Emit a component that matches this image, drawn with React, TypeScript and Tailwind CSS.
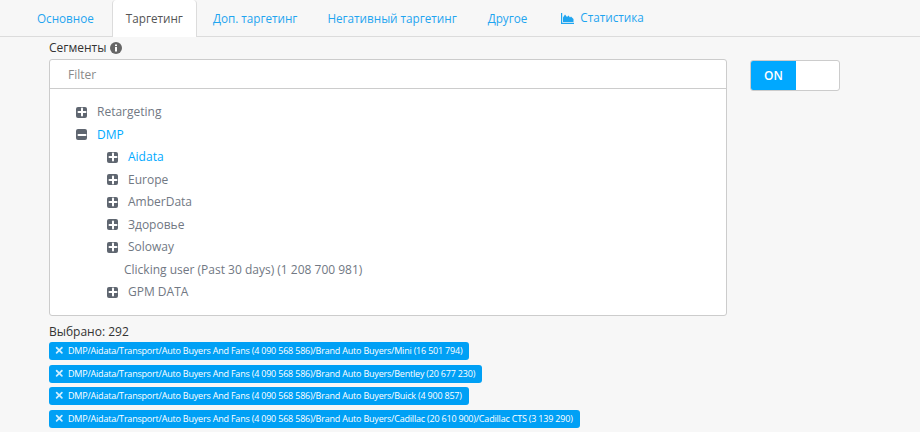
import { Minus, Plus, X } from "lucide-react";

const FONT = "font-['Open_Sans','Noto_Sans',sans-serif]";

const tabs = [
  { label: "Основное", className: "ml-[23px]" },
  { label: "Таргетинг", active: true, className: "ml-[4px]" },
  { label: "Доп. таргетинг", className: "ml-[2px]" },
  { label: "Негативный таргетинг", className: "ml-[2px]" },
  { label: "Другое", className: "ml-[3px]" },
];

const tree = [
  { label: "Retargeting", level: 0, icon: "plus" },
  { label: "DMP", level: 0, icon: "minus", active: true },
  { label: "Aidata", level: 1, icon: "plus", active: true },
  { label: "Europe", level: 1, icon: "plus" },
  { label: "AmberData", level: 1, icon: "plus" },
  { label: "Здоровье", level: 1, icon: "plus" },
  { label: "Soloway", level: 1, icon: "plus" },
  { label: "Clicking user (Past 30 days) (1 208 700 981)", level: 2 },
  { label: "GPM DATA", level: 1, icon: "plus" },
];

const chips = [
  "DMP/Aidata/Transport/Auto Buyers And Fans (4 090 568 586)/Brand Auto Buyers/Mini (16 501 794)",
  "DMP/Aidata/Transport/Auto Buyers And Fans (4 090 568 586)/Brand Auto Buyers/Bentley (20 677 230)",
  "DMP/Aidata/Transport/Auto Buyers And Fans (4 090 568 586)/Brand Auto Buyers/Buick (4 900 857)",
  "DMP/Aidata/Transport/Auto Buyers And Fans (4 090 568 586)/Brand Auto Buyers/Cadillac (20 610 900)/Cadillac CTS (3 139 290)",
];

function TreeRow({ row }: { row: (typeof tree)[number] }) {
  const indent = row.level === 0 ? "pl-[26px]" : row.level === 1 ? "pl-[57px]" : "pl-[74px]";
  return (
    <div className={`flex h-[22.5px] items-center ${indent}`}>
      {row.icon ? (
        <span className="mr-[10px] flex h-[11px] w-[11px] items-center justify-center overflow-hidden rounded-[2px] bg-[#5f6670] text-white">
          {row.icon === "plus" ? (
            <Plus className="h-[12px] w-[12px] shrink-0" strokeWidth={4} />
          ) : (
            <Minus className="h-[12px] w-[12px] shrink-0" strokeWidth={4} />
          )}
        </span>
      ) : null}
      <span className={`text-[12px] ${row.active ? "text-[#00aaff]" : "text-[#717883]"}`}>
        {row.label}
      </span>
    </div>
  );
}

export default function App() {
  return (
    <div className={`h-[432px] w-[920px] overflow-hidden bg-[#f7f7f7] ${FONT}`}>
      <div className="flex h-[37px] border-b border-[#dcdcdc] text-[11.7px] text-[#1fa5f0]">
        {tabs.map((tab) => (
          <div
            key={tab.label}
            className={`flex h-[37px] items-center rounded-t-[4px] border-x px-[13px] ${tab.className} ${
              tab.active
                ? "border-[#dcdcdc] bg-white text-[#555]"
                : "border-transparent"
            }`}
          >
            {tab.label}
          </div>
        ))}
        <div className="ml-[20px] flex items-center gap-[6px]">
          <svg viewBox="0 0 13 11" className="h-[11px] w-[13px] fill-current">
            <path d="M0 0h1.2v9.8H13V11H0z" />
            <path d="M2 9V4.5l2-3 2 2.5 1.5-1.5 1.5 2 1-1 2.5 2.5V9z" />
          </svg>
          Статистика
        </div>
      </div>

      <div className="flex items-start pl-[49px]">
        <div className="w-[678px]">
          <div className="flex h-[22px] items-center gap-[4px] text-[12px] text-[#333]">
            Сегменты
            <svg viewBox="0 0 12 12" className="h-[12px] w-[12px]">
              <circle cx="6" cy="6" r="6" fill="#666" />
              <rect x="5" y="5" width="2" height="4.5" fill="#fff" />
              <rect x="5" y="2.5" width="2" height="1.6" fill="#fff" />
            </svg>
          </div>
          <div className="h-[257px] rounded-[3px] border border-[#cccccc] bg-white">
            <div className="flex h-[29px] items-center border-b border-[#cccccc] pl-[18px] pt-[1px] text-[12px] text-[#8a8a8a]">
              Filter
            </div>
            <div className="pt-[12px]">
              {tree.map((row) => (
                <TreeRow key={row.label} row={row} />
              ))}
            </div>
          </div>
        </div>
        <div className="ml-[23px] mt-[23px] flex h-[31px] w-[90px] overflow-hidden rounded-[3px] border border-[#cccccc] bg-white">
          <div className="flex w-[45px] items-center justify-center bg-[#00a8ff] text-[12px] font-semibold text-white">
            ON
          </div>
        </div>
      </div>

      <div className="pl-[49px] pt-[8px]">
        <div className="h-[18px] text-[12px] leading-[16px] text-[#333]">Выбрано: 292</div>
        <div className="flex flex-col items-start">
          {chips.map((chip) => (
            <div
              key={chip}
              className="mb-[4.5px] flex h-[18px] items-center rounded-[3px] bg-[#00a0f5] pl-[5px] pr-[7px] text-[9px] font-medium tracking-[-0.2px] text-white"
            >
              <X className="mr-[3.5px] -mt-[1px] h-[10.5px] w-[10.5px] shrink-0 text-[#cfeeff]" strokeWidth={4} />
              {chip}
            </div>
          ))}
        </div>
      </div>
    </div>
  );
}
